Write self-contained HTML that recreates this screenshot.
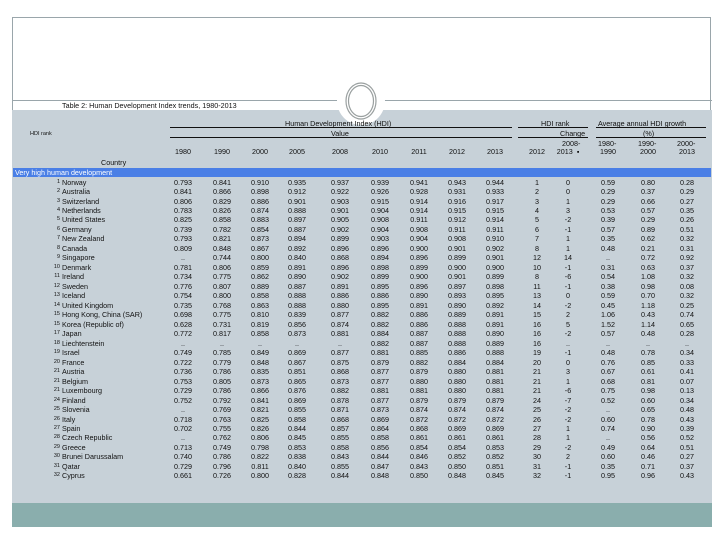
<!DOCTYPE html>
<html><head><meta charset="utf-8">
<style>
body{margin:0;width:720px;height:540px;background:#fff;position:relative;overflow:hidden;font-family:"Liberation Sans",sans-serif;font-size:7.2px;color:#111;letter-spacing:0}
.frame{position:absolute;left:12px;top:17px;width:699px;height:510px;border:1px solid #9aa6ab;border-bottom:none;box-sizing:border-box}
.grey{position:absolute;left:12px;top:110px;width:700px;height:393px;background:#c7d1d8}
.teal{position:absolute;left:12px;top:503px;width:700px;height:24px;background:#8aaead}
.hl{position:absolute;height:1px;background:#111}
.t{position:absolute;white-space:nowrap}
.blue{position:absolute;left:13px;top:168px;width:698px;height:9px;background:#4a7fe6;color:#fff;line-height:9px;padding-left:2px;box-sizing:border-box}
.r{position:absolute;left:0;height:9.5px;width:720px;line-height:9.5px}
.r span{position:absolute;text-align:center;width:34px;white-space:nowrap}
.r span:nth-child(1){left:40px;width:20px;text-align:right;font-size:5.5px}
.r span:nth-child(2){left:62px;width:110px;text-align:left}
.r span:nth-child(3){left:166px}.r span:nth-child(4){left:205px}.r span:nth-child(5){left:243px}
.r span:nth-child(6){left:280px}.r span:nth-child(7){left:323px}.r span:nth-child(8){left:363px}
.r span:nth-child(9){left:402px}.r span:nth-child(10){left:440px}.r span:nth-child(11){left:478px}
.r span:nth-child(12){left:520px}.r span:nth-child(13){left:551px}.r span:nth-child(14){left:591px}
.r span:nth-child(15){left:631px}.r span:nth-child(16){left:670px}
</style></head><body>
<div class="frame"></div>
<div class="grey"></div>
<div class="teal"></div>
<div class="hl" style="left:12px;top:100px;width:325px;background:#9aa6ab"></div>
<div class="hl" style="left:384px;top:100px;width:328px;background:#9aa6ab"></div>
<svg style="position:absolute;left:336px;top:76px" width="50" height="50"><circle cx="25" cy="25" r="24" fill="#fff"/><ellipse cx="25" cy="25" rx="15" ry="18" fill="none" stroke="#9aa0a0" stroke-width="1.2"/><ellipse cx="25" cy="25" rx="12.5" ry="15.5" fill="none" stroke="#9aa0a0" stroke-width="1.2"/></svg>
<div class="t" style="left:62px;top:101px">Table 2: Human Development Index trends, 1980-2013</div>
<div class="t" style="left:285px;top:119px">Human Development Index (HDI)</div>
<div class="hl" style="left:170px;top:127px;width:342px"></div>
<div class="t" style="left:331px;top:129px">Value</div>
<div class="hl" style="left:170px;top:137px;width:342px"></div>
<div class="t" style="left:30px;top:131px;font-size:5.5px">HDI rank</div>
<div class="t" style="left:541px;top:119px">HDI rank</div>
<div class="hl" style="left:518px;top:127px;width:70px"></div>
<div class="t" style="left:560px;top:129px">Change</div>
<div class="hl" style="left:518px;top:137px;width:70px"></div>
<div class="t" style="left:598px;top:119px">Average annual HDI growth</div>
<div class="hl" style="left:596px;top:127px;width:110px"></div>
<div class="t" style="left:643px;top:129px">(%)</div>
<div class="hl" style="left:596px;top:137px;width:110px"></div>
<div class="r" style="top:147px"><span></span><span></span><span>1980</span><span>1990</span><span>2000</span><span>2005</span><span>2008</span><span>2010</span><span>2011</span><span>2012</span><span>2013</span><span>2012</span><span>2013 &nbsp;▪</span><span>1990</span><span>2000</span><span>2013</span></div>
<div class="t" style="left:562px;top:139px">2008-</div>
<div class="t" style="left:598px;top:139px">1980-</div>
<div class="t" style="left:638px;top:139px">1990-</div>
<div class="t" style="left:677px;top:139px">2000-</div>
<div class="t" style="left:101px;top:158px">Country</div>
<div class="blue">Very high human development</div>
<div class="r" style="top:177.5px"><span>1</span><span>Norway</span><span>0.793</span><span>0.841</span><span>0.910</span><span>0.935</span><span>0.937</span><span>0.939</span><span>0.941</span><span>0.943</span><span>0.944</span><span>1</span><span>0</span><span>0.59</span><span>0.80</span><span>0.28</span></div>
<div class="r" style="top:187px"><span>2</span><span>Australia</span><span>0.841</span><span>0.866</span><span>0.898</span><span>0.912</span><span>0.922</span><span>0.926</span><span>0.928</span><span>0.931</span><span>0.933</span><span>2</span><span>0</span><span>0.29</span><span>0.37</span><span>0.29</span></div>
<div class="r" style="top:196.5px"><span>3</span><span>Switzerland</span><span>0.806</span><span>0.829</span><span>0.886</span><span>0.901</span><span>0.903</span><span>0.915</span><span>0.914</span><span>0.916</span><span>0.917</span><span>3</span><span>1</span><span>0.29</span><span>0.66</span><span>0.27</span></div>
<div class="r" style="top:205.9px"><span>4</span><span>Netherlands</span><span>0.783</span><span>0.826</span><span>0.874</span><span>0.888</span><span>0.901</span><span>0.904</span><span>0.914</span><span>0.915</span><span>0.915</span><span>4</span><span>3</span><span>0.53</span><span>0.57</span><span>0.35</span></div>
<div class="r" style="top:215.4px"><span>5</span><span>United States</span><span>0.825</span><span>0.858</span><span>0.883</span><span>0.897</span><span>0.905</span><span>0.908</span><span>0.911</span><span>0.912</span><span>0.914</span><span>5</span><span>-2</span><span>0.39</span><span>0.29</span><span>0.26</span></div>
<div class="r" style="top:224.9px"><span>6</span><span>Germany</span><span>0.739</span><span>0.782</span><span>0.854</span><span>0.887</span><span>0.902</span><span>0.904</span><span>0.908</span><span>0.911</span><span>0.911</span><span>6</span><span>-1</span><span>0.57</span><span>0.89</span><span>0.51</span></div>
<div class="r" style="top:234.4px"><span>7</span><span>New Zealand</span><span>0.793</span><span>0.821</span><span>0.873</span><span>0.894</span><span>0.899</span><span>0.903</span><span>0.904</span><span>0.908</span><span>0.910</span><span>7</span><span>1</span><span>0.35</span><span>0.62</span><span>0.32</span></div>
<div class="r" style="top:243.9px"><span>8</span><span>Canada</span><span>0.809</span><span>0.848</span><span>0.867</span><span>0.892</span><span>0.896</span><span>0.896</span><span>0.900</span><span>0.901</span><span>0.902</span><span>8</span><span>1</span><span>0.48</span><span>0.21</span><span>0.31</span></div>
<div class="r" style="top:253.3px"><span>9</span><span>Singapore</span><span>..</span><span>0.744</span><span>0.800</span><span>0.840</span><span>0.868</span><span>0.894</span><span>0.896</span><span>0.899</span><span>0.901</span><span>12</span><span>14</span><span>..</span><span>0.72</span><span>0.92</span></div>
<div class="r" style="top:262.8px"><span>10</span><span>Denmark</span><span>0.781</span><span>0.806</span><span>0.859</span><span>0.891</span><span>0.896</span><span>0.898</span><span>0.899</span><span>0.900</span><span>0.900</span><span>10</span><span>-1</span><span>0.31</span><span>0.63</span><span>0.37</span></div>
<div class="r" style="top:272.3px"><span>11</span><span>Ireland</span><span>0.734</span><span>0.775</span><span>0.862</span><span>0.890</span><span>0.902</span><span>0.899</span><span>0.900</span><span>0.901</span><span>0.899</span><span>8</span><span>-6</span><span>0.54</span><span>1.08</span><span>0.32</span></div>
<div class="r" style="top:281.8px"><span>12</span><span>Sweden</span><span>0.776</span><span>0.807</span><span>0.889</span><span>0.887</span><span>0.891</span><span>0.895</span><span>0.896</span><span>0.897</span><span>0.898</span><span>11</span><span>-1</span><span>0.38</span><span>0.98</span><span>0.08</span></div>
<div class="r" style="top:291.3px"><span>13</span><span>Iceland</span><span>0.754</span><span>0.800</span><span>0.858</span><span>0.888</span><span>0.886</span><span>0.886</span><span>0.890</span><span>0.893</span><span>0.895</span><span>13</span><span>0</span><span>0.59</span><span>0.70</span><span>0.32</span></div>
<div class="r" style="top:300.7px"><span>14</span><span>United Kingdom</span><span>0.735</span><span>0.768</span><span>0.863</span><span>0.888</span><span>0.880</span><span>0.895</span><span>0.891</span><span>0.890</span><span>0.892</span><span>14</span><span>-2</span><span>0.45</span><span>1.18</span><span>0.25</span></div>
<div class="r" style="top:310.2px"><span>15</span><span>Hong Kong, China (SAR)</span><span>0.698</span><span>0.775</span><span>0.810</span><span>0.839</span><span>0.877</span><span>0.882</span><span>0.886</span><span>0.889</span><span>0.891</span><span>15</span><span>2</span><span>1.06</span><span>0.43</span><span>0.74</span></div>
<div class="r" style="top:319.7px"><span>15</span><span>Korea (Republic of)</span><span>0.628</span><span>0.731</span><span>0.819</span><span>0.856</span><span>0.874</span><span>0.882</span><span>0.886</span><span>0.888</span><span>0.891</span><span>16</span><span>5</span><span>1.52</span><span>1.14</span><span>0.65</span></div>
<div class="r" style="top:329.2px"><span>17</span><span>Japan</span><span>0.772</span><span>0.817</span><span>0.858</span><span>0.873</span><span>0.881</span><span>0.884</span><span>0.887</span><span>0.888</span><span>0.890</span><span>16</span><span>-2</span><span>0.57</span><span>0.48</span><span>0.28</span></div>
<div class="r" style="top:338.6px"><span>18</span><span>Liechtenstein</span><span>..</span><span>..</span><span>..</span><span>..</span><span>..</span><span>0.882</span><span>0.887</span><span>0.888</span><span>0.889</span><span>16</span><span>..</span><span>..</span><span>..</span><span>..</span></div>
<div class="r" style="top:348.1px"><span>19</span><span>Israel</span><span>0.749</span><span>0.785</span><span>0.849</span><span>0.869</span><span>0.877</span><span>0.881</span><span>0.885</span><span>0.886</span><span>0.888</span><span>19</span><span>-1</span><span>0.48</span><span>0.78</span><span>0.34</span></div>
<div class="r" style="top:357.6px"><span>20</span><span>France</span><span>0.722</span><span>0.779</span><span>0.848</span><span>0.867</span><span>0.875</span><span>0.879</span><span>0.882</span><span>0.884</span><span>0.884</span><span>20</span><span>0</span><span>0.76</span><span>0.85</span><span>0.33</span></div>
<div class="r" style="top:367.1px"><span>21</span><span>Austria</span><span>0.736</span><span>0.786</span><span>0.835</span><span>0.851</span><span>0.868</span><span>0.877</span><span>0.879</span><span>0.880</span><span>0.881</span><span>21</span><span>3</span><span>0.67</span><span>0.61</span><span>0.41</span></div>
<div class="r" style="top:376.6px"><span>21</span><span>Belgium</span><span>0.753</span><span>0.805</span><span>0.873</span><span>0.865</span><span>0.873</span><span>0.877</span><span>0.880</span><span>0.880</span><span>0.881</span><span>21</span><span>1</span><span>0.68</span><span>0.81</span><span>0.07</span></div>
<div class="r" style="top:386px"><span>21</span><span>Luxembourg</span><span>0.729</span><span>0.786</span><span>0.866</span><span>0.876</span><span>0.882</span><span>0.881</span><span>0.881</span><span>0.880</span><span>0.881</span><span>21</span><span>-6</span><span>0.75</span><span>0.98</span><span>0.13</span></div>
<div class="r" style="top:395.5px"><span>24</span><span>Finland</span><span>0.752</span><span>0.792</span><span>0.841</span><span>0.869</span><span>0.878</span><span>0.877</span><span>0.879</span><span>0.879</span><span>0.879</span><span>24</span><span>-7</span><span>0.52</span><span>0.60</span><span>0.34</span></div>
<div class="r" style="top:405px"><span>25</span><span>Slovenia</span><span>..</span><span>0.769</span><span>0.821</span><span>0.855</span><span>0.871</span><span>0.873</span><span>0.874</span><span>0.874</span><span>0.874</span><span>25</span><span>-2</span><span>..</span><span>0.65</span><span>0.48</span></div>
<div class="r" style="top:414.5px"><span>26</span><span>Italy</span><span>0.718</span><span>0.763</span><span>0.825</span><span>0.858</span><span>0.868</span><span>0.869</span><span>0.872</span><span>0.872</span><span>0.872</span><span>26</span><span>-2</span><span>0.60</span><span>0.78</span><span>0.43</span></div>
<div class="r" style="top:424px"><span>27</span><span>Spain</span><span>0.702</span><span>0.755</span><span>0.826</span><span>0.844</span><span>0.857</span><span>0.864</span><span>0.868</span><span>0.869</span><span>0.869</span><span>27</span><span>1</span><span>0.74</span><span>0.90</span><span>0.39</span></div>
<div class="r" style="top:433.4px"><span>28</span><span>Czech Republic</span><span>..</span><span>0.762</span><span>0.806</span><span>0.845</span><span>0.855</span><span>0.858</span><span>0.861</span><span>0.861</span><span>0.861</span><span>28</span><span>1</span><span>..</span><span>0.56</span><span>0.52</span></div>
<div class="r" style="top:442.9px"><span>29</span><span>Greece</span><span>0.713</span><span>0.749</span><span>0.798</span><span>0.853</span><span>0.858</span><span>0.856</span><span>0.854</span><span>0.854</span><span>0.853</span><span>29</span><span>-2</span><span>0.49</span><span>0.64</span><span>0.51</span></div>
<div class="r" style="top:452.4px"><span>30</span><span>Brunei Darussalam</span><span>0.740</span><span>0.786</span><span>0.822</span><span>0.838</span><span>0.843</span><span>0.844</span><span>0.846</span><span>0.852</span><span>0.852</span><span>30</span><span>2</span><span>0.60</span><span>0.46</span><span>0.27</span></div>
<div class="r" style="top:461.9px"><span>31</span><span>Qatar</span><span>0.729</span><span>0.796</span><span>0.811</span><span>0.840</span><span>0.855</span><span>0.847</span><span>0.843</span><span>0.850</span><span>0.851</span><span>31</span><span>-1</span><span>0.35</span><span>0.71</span><span>0.37</span></div>
<div class="r" style="top:471.4px"><span>32</span><span>Cyprus</span><span>0.661</span><span>0.726</span><span>0.800</span><span>0.828</span><span>0.844</span><span>0.848</span><span>0.850</span><span>0.848</span><span>0.845</span><span>32</span><span>-1</span><span>0.95</span><span>0.96</span><span>0.43</span></div>
</body></html>
